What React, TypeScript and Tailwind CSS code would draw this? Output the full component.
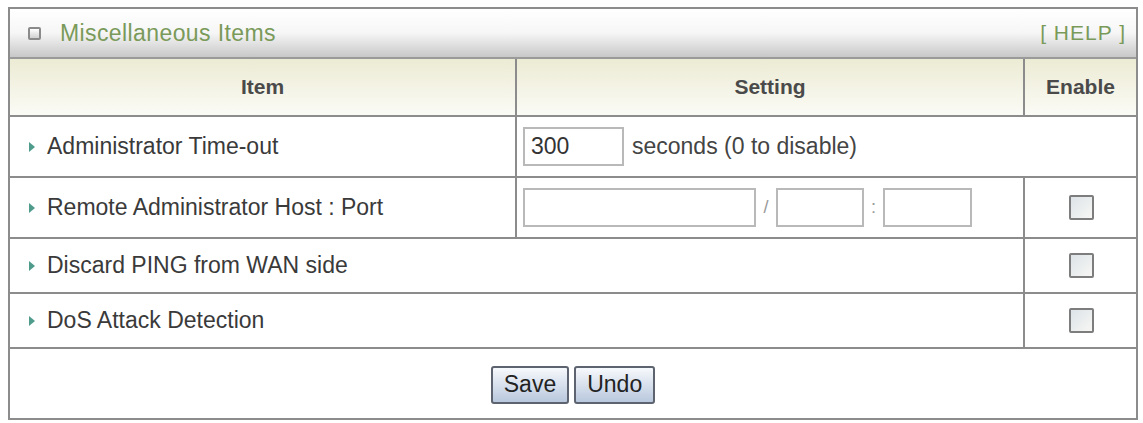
import React from "react";

const font = { fontFamily: '"Liberation Sans", Arial, sans-serif' };

function Arrow() {
  return (
    <svg width="8" height="12" viewBox="0 0 8 12" className="shrink-0">
      <path d="M1 1 L7 6 L1 11 Z" fill="#4f9c8c" />
    </svg>
  );
}

function Check() {
  return (
    <span className="block w-[25px] h-[25px] rounded-[2px] border-2 border-[#7d7d7d] bg-gradient-to-br from-[#dde3e8] to-[#f7f7f4]" />
  );
}

function TextBox({ w, value }: { w: string; value?: string }) {
  return (
    <span
      className={`${w} h-[39px] flex items-center px-[6px] border-2 border-[#b9b9b9] bg-white text-[23px] text-[#333]`}
    >
      {value}
    </span>
  );
}

function Btn({ label }: { label: string }) {
  return (
    <button className="h-[38px] px-[11px] rounded-[3px] border-2 border-[#5d6470] bg-gradient-to-b from-[#f7f9fc] to-[#b9c8dd] text-[23px] text-[#222] leading-none">
      {label}
    </button>
  );
}

export default function App() {
  const line = "border-[#8c8c8c]";
  return (
    <div className="w-[1143px] h-[423px] bg-white pt-[7px] pl-[8px]" style={font}>
      <div className={`w-[1130px] h-[413px] border-2 ${line} flex flex-col`}>
        {/* title bar */}
        <div className="h-[50px] shrink-0 flex items-center justify-between pl-[18px] pr-[10px] bg-gradient-to-b from-[#ffffff] via-[#f6f6f6] to-[#c8c8c8] border-b-2 border-[#9a9a9a]">
          <div className="flex items-center gap-[19px]">
            <span className="block w-[13px] h-[13px] rounded-[2px] border-2 border-[#8a8a8a] bg-gradient-to-b from-[#ffffff] to-[#d0d0d0]" />
            <span className="text-[23px] text-[#7a9a5a] tracking-[0.4px]">Miscellaneous Items</span>
          </div>
          <span className="text-[21px] text-[#7a9a5a] tracking-[1px]">[ HELP ]</span>
        </div>

        {/* header */}
        <div className={`h-[58px] shrink-0 grid grid-cols-[507px_508px_1fr] border-b-2 ${line} bg-gradient-to-b from-[#ecebd4] to-[#fbfbf6] text-[21px] font-bold text-[#4a4a4a]`}>
          <div className={`flex items-center justify-center border-r-2 ${line}`}>Item</div>
          <div className={`flex items-center justify-center border-r-2 ${line}`}>Setting</div>
          <div className="flex items-center justify-center">Enable</div>
        </div>

        {/* Administrator Time-out */}
        <div className={`h-[61px] shrink-0 grid grid-cols-[507px_1fr] border-b-2 ${line} text-[23px] text-[#3a3a3a]`}>
          <div className={`flex items-center gap-[11px] pl-[18px] border-r-2 ${line}`}>
            <Arrow />
            <span>Administrator Time-out</span>
          </div>
          <div className="flex items-center gap-[8px] pl-[6px]">
            <TextBox w="w-[101px]" value="300" />
            <span className="text-[#444]">seconds (0 to disable)</span>
          </div>
        </div>

        {/* Remote Administrator Host : Port */}
        <div className={`h-[61px] shrink-0 grid grid-cols-[507px_508px_1fr] border-b-2 ${line} text-[23px] text-[#3a3a3a]`}>
          <div className={`flex items-center gap-[11px] pl-[18px] border-r-2 ${line}`}>
            <Arrow />
            <span>Remote Administrator Host : Port</span>
          </div>
          <div className={`flex items-center pl-[6px] border-r-2 ${line}`}>
            <TextBox w="w-[233px]" />
            <span className="w-[20px] text-center text-[#999] text-[18px]">/</span>
            <TextBox w="w-[88px]" />
            <span className="w-[19px] text-center text-[#999] text-[18px]">:</span>
            <TextBox w="w-[89px]" />
          </div>
          <div className="flex items-center justify-center pl-[1px]">
            <Check />
          </div>
        </div>

        {/* Discard PING from WAN side */}
        <div className={`h-[55px] shrink-0 grid grid-cols-[1015px_1fr] border-b-2 ${line} text-[23px] text-[#3a3a3a]`}>
          <div className={`flex items-center gap-[11px] pl-[18px] border-r-2 ${line}`}>
            <Arrow />
            <span>Discard PING from WAN side</span>
          </div>
          <div className="flex items-center justify-center pl-[1px]">
            <Check />
          </div>
        </div>

        {/* DoS Attack Detection */}
        <div className={`h-[55px] shrink-0 grid grid-cols-[1015px_1fr] border-b-2 ${line} text-[23px] text-[#3a3a3a]`}>
          <div className={`flex items-center gap-[11px] pl-[18px] border-r-2 ${line}`}>
            <Arrow />
            <span>DoS Attack Detection</span>
          </div>
          <div className="flex items-center justify-center pl-[1px]">
            <Check />
          </div>
        </div>

        {/* actions */}
        <div className="flex-1 flex items-center justify-center gap-[5px] pt-[2px]">
          <Btn label="Save" />
          <Btn label="Undo" />
        </div>
      </div>
    </div>
  );
}
